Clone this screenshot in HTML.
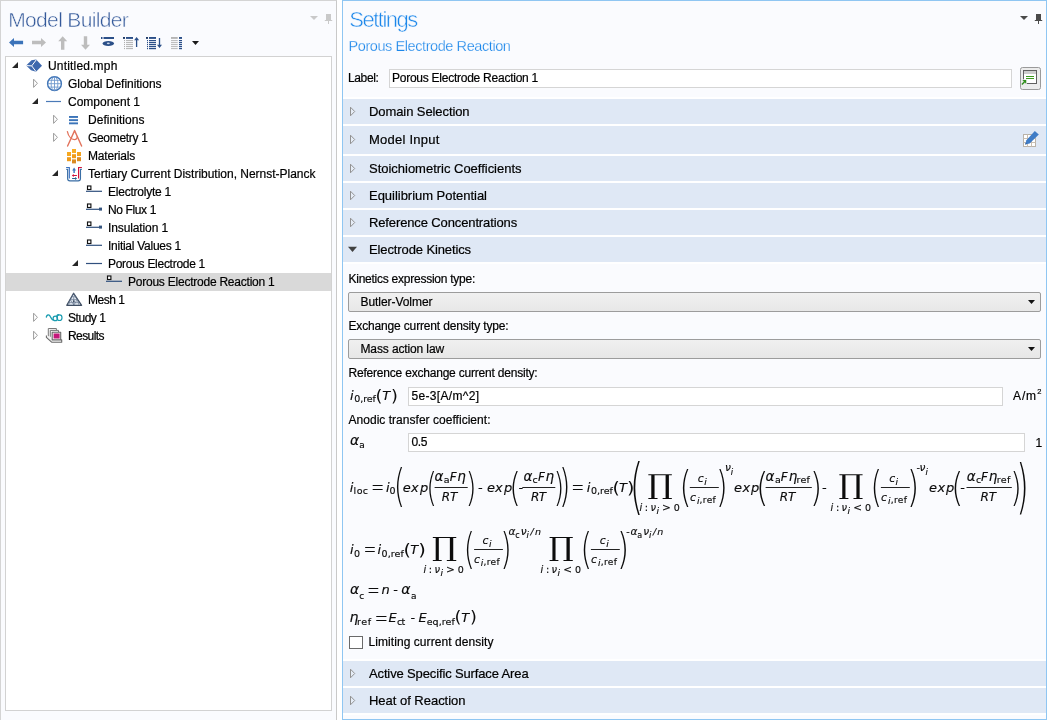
<!DOCTYPE html>
<html lang="en"><head><meta charset="utf-8"><title>Settings - Porous Electrode Reaction</title>
<style>
html,body{margin:0;padding:0;}
body{width:1047px;height:720px;overflow:hidden;background:#fff;font-family:"Liberation Sans",sans-serif;font-size:12px;color:#000;}
#app{will-change:transform;position:relative;width:1047px;height:720px;overflow:hidden;background:#fff;}
.t{position:absolute;white-space:nowrap;line-height:20px;height:20px;-webkit-text-stroke:0.2px currentColor;}
.abs{position:absolute;}
#left{position:absolute;left:0;top:0;width:337px;height:720px;background:#fafbfe;border-left:1px solid #d4d4d4;border-top:1px solid #d4d4d4;border-right:1px solid #c9c9c9;box-sizing:border-box;}
#tree{position:absolute;left:5px;top:56px;width:327px;height:655px;background:#fff;border:1px solid #d2d2d2;box-sizing:border-box;}
#sel{position:absolute;left:6px;top:273px;width:325px;height:18px;background:#d9d9d9;}
#right{position:absolute;left:342px;top:0;width:705px;height:720px;background:#fafbfe;border:1px solid #8fc6f2;box-sizing:border-box;}
.band{position:absolute;left:343px;width:703px;height:25px;background:#dfe8f5;}
.inp{position:absolute;background:#fff;border:1px solid #d5d5d5;box-sizing:border-box;}
.combo{position:absolute;left:348px;width:693px;height:20px;box-sizing:border-box;border:1px solid #9c9c9c;border-radius:2px;background:linear-gradient(#f0f0f0,#e7e7e7);}
svg{position:absolute;overflow:visible;}
.thin{-webkit-text-stroke:0.5px #fafbfe;}
.thin2{-webkit-text-stroke:0.25px #fafbfe;}

</style></head>
<body>
<div id="app">
<div id="left"></div><div id="tree"></div><div id="sel"></div><div id="right"></div>
<div class="inp" style="left:389px;top:69px;width:623px;height:19px"></div>
<div class="abs" style="left:343px;top:97px;width:703px;height:2px;background:#fff"></div><div class="abs" style="left:343px;top:659px;width:703px;height:2px;background:#fff"></div>
<div class="band" style="top:99px;height:25px;border-bottom:2px solid #fff"></div>
<div class="band" style="top:126px;height:28px;border-bottom:2px solid #fff"></div>
<div class="band" style="top:156px;height:25px;border-bottom:2px solid #fff"></div>
<div class="band" style="top:183px;height:25px;border-bottom:2px solid #fff"></div>
<div class="band" style="top:210px;height:25px;border-bottom:2px solid #fff"></div>
<div class="band" style="top:237px;height:25px;border-bottom:2px solid #fff"></div>
<div class="band" style="top:661px;height:25px;border-bottom:2px solid #fff"></div>
<div class="band" style="top:688px;height:25px;border-bottom:2px solid #fff"></div>
<div class="combo" style="top:292px"></div>
<div class="combo" style="top:339px"></div>
<div class="inp" style="left:408px;top:387px;width:595px;height:19px"></div>
<div class="inp" style="left:408px;top:433px;width:617px;height:19px"></div>
<div class="abs" style="left:349px;top:636px;width:14px;height:13px;box-sizing:border-box;border:1px solid #6a6a6a;background:#fff"></div>
<svg id='ic' width='1047' height='720' viewBox='0 0 1047 720' style='left:0;top:0'>
<polygon points='310,16 318,16 314.0,20' fill='#c9c9c9'/>
<path d='M326 14h5v6h1.2v1h-7.4v-1h1.2z' fill='#c9c9c9'/><rect x='328' y='21' width='1' height='3' fill='#c9c9c9'/>
<polygon points='1020,16 1028,16 1024.0,20' fill='#4a4a4a'/>
<path d='M1036 14h5v6h1.2v1h-7.4v-1h1.2z' fill='#4a4a4a'/><rect x='1038' y='21' width='1' height='3' fill='#4a4a4a'/>
<path d='M9 42.5 L14 38 V40.8 H23.1 V44.3 H14 V47 Z' fill='#3b73b9'/>
<path d='M46 42.5 L41 38 V40.8 H32 V44.3 H41 V47 Z' fill='#bdbdbd'/>
<path d='M62.7 36.3 L67.2 41.3 H64.4 V49.7 H61 V41.3 H58.2 Z' fill='#bdbdbd'/>
<path d='M85.5 49.7 L90 44.7 H87.2 V36.2 H83.8 V44.7 H81 Z' fill='#bdbdbd'/>
<rect x='101' y='37' width='1.5' height='2' fill='#2b4f88'/><rect x='103.5' y='37' width='10.5' height='2' fill='#2b4f88'/>
<ellipse cx='108.3' cy='43.5' rx='5.7' ry='2.4' fill='#2b4f88'/><ellipse cx='108.3' cy='43.3' rx='1.5' ry='0.9' fill='#c9d6ea'/>
<rect x='123' y='37' width='2' height='1.9' fill='#1f3a66'/><rect x='126' y='37' width='7' height='1.9' fill='#2b4f88'/>
<rect x='124' y='40.1' width='1' height='1' fill='#a8a8a8'/><rect x='126' y='40.1' width='7' height='1' fill='#b3b3b3'/>
<rect x='124' y='42.1' width='1' height='1' fill='#a8a8a8'/><rect x='126' y='42.1' width='7' height='1' fill='#b3b3b3'/>
<rect x='124' y='44.1' width='1' height='1' fill='#a8a8a8'/><rect x='126' y='44.1' width='7' height='1' fill='#b3b3b3'/>
<rect x='124' y='46.1' width='1' height='1' fill='#a8a8a8'/><rect x='126' y='46.1' width='7' height='1' fill='#b3b3b3'/>
<rect x='124' y='48.1' width='1' height='1' fill='#a8a8a8'/><rect x='126' y='48.1' width='7' height='1' fill='#b3b3b3'/>
<path d='M136.6 36.9 L139.1 40.2 H137.25 V46.9 H135.95 V40.2 H134.1 Z' fill='#2b4f88'/>
<rect x='146' y='37' width='2' height='1.9' fill='#1f3a66'/><rect x='149' y='37' width='7' height='1.9' fill='#2b4f88'/>
<rect x='147' y='40' width='1' height='1.2' fill='#2b4f88'/><rect x='149' y='40' width='7' height='1.2' fill='#2b4f88'/>
<rect x='147' y='42' width='1' height='1.2' fill='#2b4f88'/><rect x='149' y='42' width='7' height='1.2' fill='#2b4f88'/>
<rect x='147' y='44' width='1' height='1.2' fill='#2b4f88'/><rect x='149' y='44' width='7' height='1.2' fill='#2b4f88'/>
<rect x='147' y='46' width='1' height='1.2' fill='#2b4f88'/><rect x='149' y='46' width='7' height='1.2' fill='#2b4f88'/>
<rect x='147' y='48' width='1' height='1.2' fill='#2b4f88'/><rect x='149' y='48' width='7' height='1.2' fill='#2b4f88'/>
<path d='M159.5 48.1 L162 44.8 H160.15 V38 H158.85 V44.8 H157 Z' fill='#2b4f88'/>
<rect x='171' y='37' width='6.7' height='1.9' fill='#b5b5b5'/><rect x='179' y='37' width='3' height='1.9' fill='#2b4f88'/>
<rect x='171' y='40.1' width='6.7' height='1' fill='#b9b9b9'/><rect x='179' y='40' width='3' height='1.2' fill='#2b4f88'/>
<rect x='171' y='42.1' width='6.7' height='1' fill='#b9b9b9'/><rect x='179' y='42' width='3' height='1.2' fill='#2b4f88'/>
<rect x='171' y='44.1' width='6.7' height='1' fill='#b9b9b9'/><rect x='179' y='44' width='3' height='1.2' fill='#2b4f88'/>
<rect x='171' y='46.1' width='6.7' height='1' fill='#b9b9b9'/><rect x='179' y='46' width='3' height='1.2' fill='#2b4f88'/>
<rect x='171' y='48.1' width='6.7' height='1' fill='#b9b9b9'/><rect x='179' y='48' width='3' height='1.2' fill='#2b4f88'/>
<polygon points='192,41 199,41 195.5,45' fill='#1a1a1a'/>
<polygon points='18,62 18,68 12,68' fill='#262626'/>
<polygon points='33.6,79.2 33.6,87.4 37.4,83.3' fill='#fff' stroke='#9c9c9c' stroke-width='1'/>
<polygon points='38,98 38,104 32,104' fill='#262626'/>
<polygon points='53.6,115.2 53.6,123.4 57.4,119.3' fill='#fff' stroke='#9c9c9c' stroke-width='1'/>
<polygon points='53.6,133.2 53.6,141.4 57.4,137.3' fill='#fff' stroke='#9c9c9c' stroke-width='1'/>
<polygon points='58,170 58,176 52,176' fill='#262626'/>
<polygon points='78,260 78,266 72,266' fill='#262626'/>
<polygon points='33.6,313.2 33.6,321.4 37.4,317.3' fill='#fff' stroke='#9c9c9c' stroke-width='1'/>
<polygon points='33.6,331.2 33.6,339.4 37.4,335.3' fill='#fff' stroke='#9c9c9c' stroke-width='1'/>
<polygon points='26.2,65.5 31.5,60.3 36.2,59.5 42,65.8 36,71.8 31,70.3' fill='#3d68ad'/><path d='M26.4 65.6 L31.7 65.9 L36.3 59.8 M31.7 65.9 L36 71.6' stroke='#fff' stroke-width='1' fill='none'/>
<circle cx='54.5' cy='83.7' r='6.9' fill='#fff' stroke='#3f74b6' stroke-width='1.4'/><path d='M54.5 77 V90.4 M47.8 83.7 H61.2 M49 80.3 H60 M49 87.1 H60' stroke='#6d97cd' stroke-width='0.9' fill='none'/><ellipse cx='54.5' cy='83.7' rx='3.4' ry='6.7' fill='none' stroke='#6d97cd' stroke-width='0.9'/>
<rect x='46' y='100.9' width='15' height='1.2' fill='#4a7ab7'/>
<rect x='69' y='116' width='9' height='1.9' fill='#3b74b9'/>
<rect x='69' y='119.2' width='9' height='1.9' fill='#3b74b9'/>
<rect x='69' y='122.4' width='9' height='1.9' fill='#3b74b9'/>
<path d='M74.6 130.6 L67.6 146 M74.6 130.6 L81.6 146' stroke='#e2735c' stroke-width='1.4' fill='none' stroke-linecap='round'/><path d='M67.4 131.6 C68.5 136.5 71.5 139.6 74.4 139.6 C76.3 139.6 77.3 138.4 77.2 136.6' stroke='#e2735c' stroke-width='1.3' fill='none' stroke-linecap='round'/>
<rect x='67' y='152' width='4' height='4' fill='#f6a821'/>
<rect x='67' y='157.2' width='4' height='4' fill='#ee9a1b'/>
<rect x='72' y='149' width='4' height='4' fill='#f8ad25'/>
<rect x='72' y='154.2' width='4' height='4' fill='#f09c1c'/>
<rect x='72' y='159.4' width='4' height='4' fill='#d98a22'/>
<rect x='77' y='152' width='4' height='4' fill='#f3a21f'/>
<rect x='77' y='157.2' width='4' height='4' fill='#dd8d20'/>
<path d='M66.3 169.4 H67.6 V178.6 Q67.6 180.9 69.9 180.9 H78.2 Q80.5 180.9 80.5 178.6 V169.4 H81.8' stroke='#3a6ea5' stroke-width='1.1' fill='none'/><path d='M66.1 167.5 H69.3 V178.6' stroke='#3a72c0' stroke-width='1.2' fill='none'/><path d='M81.9 167.5 H78.6 V178.6' stroke='#d2143c' stroke-width='1.2' fill='none'/><path d='M74.1 167.4 L76 170.4 H74.8 V172.9 H73.4 V170.4 H72.2 Z' fill='#3a72c0'/><path d='M71.8 175.4 L73.8 173.9 V174.9 H76.9 V175.9 H73.8 V176.9 Z' fill='#d2143c'/><path d='M77.1 178.6 L75.1 177.1 V178.1 H72.1 V179.1 H75.1 V180.1 Z' fill='#2a5e8c'/>
<rect x='87.5' y='186' width='3.4' height='3.5' fill='#fff' stroke='#111' stroke-width='1.15'/>
<rect x='86' y='190.7' width='16' height='1.2' fill='#30507e'/>
<rect x='87.5' y='204' width='3.4' height='3.5' fill='#fff' stroke='#111' stroke-width='1.15'/>
<rect x='86' y='208.7' width='13.5' height='1.2' fill='#30507e'/>
<rect x='99' y='207.6' width='3' height='3' fill='#35557f'/>
<rect x='87.5' y='222' width='3.4' height='3.5' fill='#fff' stroke='#111' stroke-width='1.15'/>
<rect x='86' y='226.7' width='13.5' height='1.2' fill='#30507e'/>
<rect x='99' y='225.6' width='3' height='3' fill='#35557f'/>
<rect x='87.5' y='240' width='3.4' height='3.5' fill='#fff' stroke='#111' stroke-width='1.15'/>
<rect x='86' y='244.7' width='16' height='1.2' fill='#30507e'/>
<rect x='107.5' y='276' width='3.4' height='3.5' fill='#fff' stroke='#111' stroke-width='1.15'/>
<rect x='106' y='280.7' width='16' height='1.2' fill='#30507e'/>
<rect x='86' y='262.9' width='16' height='1.2' fill='#30507e'/>
<path d='M73.6 293.3 L81.6 305.3 H66.8 Z' fill='#dde4ee' stroke='#3f4e63' stroke-width='1.3' stroke-linejoin='round'/><path d='M70.2 299.6 H77.2 M73.6 293.6 L70.2 299.6 L73.9 305 L77.2 299.6 Z M68.5 302.6 H79.4 M70.2 299.6 L68.6 305 M77.2 299.6 L79 305 M71.9 296.7 H75.5 M73.7 296.8 V305' stroke='#5d6d85' stroke-width='0.6' fill='none'/><circle cx='73.8' cy='301.2' r='0.9' fill='#3f4e63'/>
<path d='M46.3 317 C46.9 314.6 48.8 314.4 50 316 C51.2 317.8 51.8 319.8 53.2 320.1' stroke='#1a9cb0' stroke-width='1.3' fill='none' stroke-linecap='round'/><circle cx='55.3' cy='318.4' r='2.2' fill='none' stroke='#1a9cb0' stroke-width='1.2'/><ellipse cx='59.5' cy='317.7' rx='2.5' ry='2.8' fill='none' stroke='#1a9cb0' stroke-width='1.2'/><path d='M56.6 316.4 C57 314.8 58.2 314.3 59 314.9' stroke='#1a9cb0' stroke-width='1.1' fill='none'/>
<path d='M48.3 337 V328.5 H56.4 V330.4' fill='#f6f6f6' stroke='#7a7a7a' stroke-width='1'/><path d='M50.3 338.5 V330.4 H58.5 V332.3' fill='#f6f6f6' stroke='#747474' stroke-width='1'/><path d='M46.4 335.6 V337.4 L51.6 342.2 H61.7 V339.9 H52.2 V332.3 H60.7 V339.9' fill='#f3f3f3' stroke='#6a6a6a' stroke-width='1.1' stroke-linejoin='round'/><rect x='53.6' y='333.5' width='6' height='5' fill='#c4177a'/>
<rect x='1020.5' y='67.5' width='20' height='22' rx='2' fill='#ececec' stroke='#9a9a9a'/><rect x='1023.5' y='70.5' width='13' height='13' fill='#fff' stroke='#606060'/><rect x='1024' y='71' width='12' height='3' fill='#cdcdcd'/><rect x='1026' y='76' width='8' height='1' fill='#3c9b1e'/><rect x='1026' y='78' width='8' height='1' fill='#3c9b1e'/><path d='M1021 79.2 H1027 V85.4 H1021 Z' fill='#ececec' opacity='0.9'/><path d='M1022.4 80 H1026.2 V83.8 Z' fill='#2f8f1a'/><path d='M1024.8 81.4 L1021.9 84.4' stroke='#2f8f1a' stroke-width='1.4' fill='none'/>
<rect x='1023.5' y='134.5' width='12' height='12' fill='#fff' stroke='#b9b2a8'/><path d='M1027.5 134.5 V146.5 M1031.5 134.5 V146.5 M1023.5 138.5 H1035.5 M1023.5 142.5 H1035.5' stroke='#c9bfb2' stroke-width='1' fill='none'/><path d='M1034.8 131 L1038.8 134.6 L1029.6 143.6 L1025.2 144.4 L1026.4 140.2 Z' fill='#3f7cc6'/><path d='M1025.2 144.4 L1026.9 144.1 L1025.7 142.9 Z' fill='#24436e'/>
<polygon points='1028,300 1035,300 1031.5,304' fill='#111'/>
<polygon points='1028,347 1035,347 1031.5,351' fill='#111'/>
<polygon points='350.5,107.2 350.5,115.8 354.7,111.5' fill='#e6edf7' stroke='#929292' stroke-width='1'/>
<polygon points='350.5,135.2 350.5,143.8 354.7,139.5' fill='#e6edf7' stroke='#929292' stroke-width='1'/>
<polygon points='350.5,164.2 350.5,172.8 354.7,168.5' fill='#e6edf7' stroke='#929292' stroke-width='1'/>
<polygon points='350.5,191.2 350.5,199.8 354.7,195.5' fill='#e6edf7' stroke='#929292' stroke-width='1'/>
<polygon points='350.5,218.2 350.5,226.8 354.7,222.5' fill='#e6edf7' stroke='#929292' stroke-width='1'/>
<polygon points='350.5,669.2 350.5,677.8 354.7,673.5' fill='#e6edf7' stroke='#929292' stroke-width='1'/>
<polygon points='350.5,696.2 350.5,704.8 354.7,700.5' fill='#e6edf7' stroke='#929292' stroke-width='1'/>
<polygon points='348,246.8 357,246.8 352.5,252' fill='#414141'/>
</svg>
<svg id='eq' width='1047' height='720' viewBox='0 0 1047 720' style='left:0;top:0'>
<style>
#eq text{fill:#0c0c0c;stroke:#0c0c0c;stroke-width:0.15px;font-family:'DejaVu Sans',sans-serif;font-size:13px}
#eq .i{font-style:italic}
#eq .u{font-style:normal}
#eq .L{font-family:'DejaVu Sans Light','DejaVu Sans',sans-serif;font-size:100px;stroke:none}
#eq .D{font-size:100px;stroke:none}
#eq .S{font-family:'DejaVu Serif','Liberation Serif',serif;font-size:100px;stroke:none}
</style>
<text class='i' x='349.80' y='491.70'>i</text>
<text class='u' x='353.60' y='493.60' style="font-size:9.5px;letter-spacing:0.40px">loc</text>
<text class='L' transform='matrix(0.1587 0 0 0.2400 371.03 495.06)'>=</text>
<text class='i' x='385.90' y='491.70'>i</text>
<text class='u' x='389.60' y='493.80' style="font-size:9.5px">0</text>
<text class='L' transform='matrix(0.2914 0 0 0.4380 393.79 501.49)'>(</text>
<text class='i' x='402.7 410.9 419.9' y='491.70'>exp</text>
<text class='L' transform='matrix(0.2743 0 0 0.3933 426.18 500.69)'>(</text>
<text class='i' x='434.50' y='480.70' style="font-size:13.5px">α</text>
<text class='u' x='443.80' y='483.00' style="font-size:9.5px">a</text>
<text class='i' x='449.80' y='480.70' style="font-size:12px">F</text>
<text class='i' x='457.30' y='480.70' style="font-size:13.5px">η</text>
<text class='i' x='441.80' y='500.50' style="font-size:12px;letter-spacing:-0.10px">RT</text>
<text class='L' transform='matrix(0.2833 0 0 0.3933 465.48 500.69)'>)</text>
<text class='u' x='477.90' y='491.70'>-</text>
<text class='i' x='487.0 495.0 504.0' y='491.70'>exp</text>
<text class='L' transform='matrix(0.2971 0 0 0.3933 509.33 500.69)'>(</text>
<text class='u' x='518.40' y='491.70'>-</text>
<text class='i' x='523.50' y='480.70' style="font-size:13.5px">α</text>
<text class='u' x='532.60' y='483.00' style="font-size:9.5px">c</text>
<text class='i' x='537.90' y='480.70' style="font-size:12px">F</text>
<text class='i' x='545.50' y='480.70' style="font-size:13.5px">η</text>
<text class='i' x='530.90' y='500.50' style="font-size:12px;letter-spacing:-0.40px">RT</text>
<text class='L' transform='matrix(0.2778 0 0 0.3933 553.44 500.69)'>)</text>
<text class='L' transform='matrix(0.2944 0 0 0.4380 559.06 501.49)'>)</text>
<text class='L' transform='matrix(0.1556 0 0 0.2400 571.17 495.06)'>=</text>
<text class='i' x='586.80' y='491.70'>i</text>
<text class='u' x='591.10' y='493.80' style="font-size:9.5px;letter-spacing:-0.03px">0,ref</text>
<text class='D' transform='matrix(0.1867 0 0 0.1575 612.41 492.67)'>(</text>
<text class='i' x='619.00' y='491.70'>T</text>
<text class='D' transform='matrix(0.1911 0 0 0.1575 627.07 492.67)'>)</text>
<text class='L' transform='matrix(0.3486 0 0 0.6011 629.87 506.98)'>(</text>
<text class='S' transform='matrix(0.3168 0 0 0.2721 647.41 493.79)'>∏</text>
<text class='i' x='639.50' y='510.70' style="font-size:9.8px">i</text>
<text class='u' x='644.80' y='510.70' style="font-size:9.8px">:</text>
<text class='i' x='650.40' y='510.70' style="font-size:9.8px">ν</text>
<text class='i' x='656.40' y='513.70' style="font-size:9px">i</text>
<text class='u' x='662.10' y='510.70' style="font-size:10.5px">&gt;</text>
<text class='u' x='673.80' y='510.70' style="font-size:9.5px">0</text>
<text class='L' transform='matrix(0.3086 0 0 0.4279 679.51 501.82)'>(</text>
<text class='i' x='697.80' y='481.60' style="font-size:10.8px">c</text>
<text class='i' x='704.20' y='484.60' style="font-size:9px">i</text>
<text class='i' x='690.00' y='500.70' style="font-size:10.8px">c</text>
<text class='i' x='696.90' y='503.60' style="font-size:9px">i</text>
<text class='u' x='699.60' y='503.40' style="font-size:9.0px;letter-spacing:0.37px">,ref</text>
<text class='L' transform='matrix(0.3000 0 0 0.4279 716.00 501.82)'>)</text>
<text class='i' x='725.00' y='471.10' style="font-size:10.5px">ν</text>
<text class='i' x='730.70' y='474.50' style="font-size:8.5px">i</text>
<text class='i' x='734.0 742.5 751.1' y='491.70'>exp</text>
<text class='L' transform='matrix(0.3200 0 0 0.3899 755.88 500.54)'>(</text>
<text class='i' x='765.50' y='480.70' style="font-size:13.5px">α</text>
<text class='u' x='774.90' y='483.00' style="font-size:9.5px">a</text>
<text class='i' x='780.80' y='480.70' style="font-size:12px">F</text>
<text class='i' x='788.70' y='480.70' style="font-size:13.5px">η</text>
<text class='u' x='796.60' y='482.50' style="font-size:9.5px;letter-spacing:0.20px">ref</text>
<text class='i' x='779.80' y='500.50' style="font-size:12px;letter-spacing:-0.20px">RT</text>
<text class='L' transform='matrix(0.3111 0 0 0.3899 809.88 500.54)'>)</text>
<text class='u' x='822.00' y='491.70'>-</text>
<text class='S' transform='matrix(0.3128 0 0 0.2721 838.62 493.79)'>∏</text>
<text class='i' x='830.60' y='510.70' style="font-size:9.8px">i</text>
<text class='u' x='835.90' y='510.70' style="font-size:9.8px">:</text>
<text class='i' x='841.50' y='510.70' style="font-size:9.8px">ν</text>
<text class='i' x='847.50' y='513.70' style="font-size:9px">i</text>
<text class='u' x='853.20' y='510.70' style="font-size:10.5px">&lt;</text>
<text class='u' x='864.90' y='510.70' style="font-size:9.5px">0</text>
<text class='L' transform='matrix(0.2971 0 0 0.4279 870.43 501.82)'>(</text>
<text class='i' x='889.20' y='481.60' style="font-size:10.8px">c</text>
<text class='i' x='895.60' y='484.60' style="font-size:9px">i</text>
<text class='i' x='881.10' y='500.70' style="font-size:10.8px">c</text>
<text class='i' x='888.00' y='503.60' style="font-size:9px">i</text>
<text class='u' x='890.70' y='503.40' style="font-size:9.0px;letter-spacing:0.37px">,ref</text>
<text class='L' transform='matrix(0.3111 0 0 0.4279 907.08 501.82)'>)</text>
<text class='u' x='916.50' y='471.10' style="font-size:9.5px">-</text>
<text class='i' x='919.50' y='471.10' style="font-size:10.5px">ν</text>
<text class='i' x='925.50' y='474.50' style="font-size:8.5px">i</text>
<text class='i' x='928.9 937.4 946.0' y='491.70'>exp</text>
<text class='L' transform='matrix(0.3086 0 0 0.3899 951.21 500.54)'>(</text>
<text class='u' x='960.20' y='491.70'>-</text>
<text class='i' x='966.80' y='480.70' style="font-size:13.5px">α</text>
<text class='u' x='976.00' y='483.00' style="font-size:9.5px">c</text>
<text class='i' x='981.10' y='480.70' style="font-size:12px">F</text>
<text class='i' x='988.80' y='480.70' style="font-size:13.5px">η</text>
<text class='u' x='996.80' y='482.50' style="font-size:9.5px;letter-spacing:0.35px">ref</text>
<text class='i' x='980.60' y='500.50' style="font-size:12px;letter-spacing:-0.10px">RT</text>
<text class='L' transform='matrix(0.2944 0 0 0.3899 1010.36 500.54)'>)</text>
<text class='L' transform='matrix(0.3222 0 0 0.5944 1016.26 506.68)'>)</text>
<text class='i' x='350.10' y='553.60'>i</text>
<text class='u' x='354.10' y='556.50' style="font-size:9.5px">0</text>
<text class='L' transform='matrix(0.1540 0 0 0.2400 363.38 557.26)'>=</text>
<text class='i' x='377.60' y='553.60'>i</text>
<text class='u' x='381.60' y='556.50' style="font-size:9.5px;letter-spacing:0.08px">0,ref</text>
<text class='D' transform='matrix(0.1911 0 0 0.1587 403.38 555.06)'>(</text>
<text class='i' x='410.30' y='553.60'>T</text>
<text class='D' transform='matrix(0.1956 0 0 0.1587 418.14 555.06)'>)</text>
<text class='S' transform='matrix(0.3154 0 0 0.2656 431.71 555.72)'>∏</text>
<text class='i' x='423.50' y='572.50' style="font-size:9.8px">i</text>
<text class='u' x='428.80' y='572.50' style="font-size:9.8px">:</text>
<text class='i' x='434.40' y='572.50' style="font-size:9.8px">ν</text>
<text class='i' x='440.40' y='575.50' style="font-size:9px">i</text>
<text class='u' x='446.10' y='572.50' style="font-size:10.5px">&gt;</text>
<text class='u' x='457.80' y='572.50' style="font-size:9.5px">0</text>
<text class='L' transform='matrix(0.2857 0 0 0.4268 463.86 564.04)'>(</text>
<text class='i' x='482.50' y='543.60' style="font-size:10.8px">c</text>
<text class='i' x='488.90' y='546.60' style="font-size:9px">i</text>
<text class='i' x='473.90' y='562.70' style="font-size:10.8px">c</text>
<text class='i' x='480.80' y='565.60' style="font-size:9px">i</text>
<text class='u' x='483.50' y='565.40' style="font-size:9.0px;letter-spacing:0.37px">,ref</text>
<text class='L' transform='matrix(0.2944 0 0 0.4268 500.36 564.04)'>)</text>
<text class='i' x='508.40' y='534.50' style="font-size:10.5px">α</text>
<text class='u' x='515.30' y='537.60' style="font-size:8px">c</text>
<text class='i' x='520.80' y='534.50' style="font-size:10.5px">ν</text>
<text class='i' x='526.60' y='537.60' style="font-size:8.5px">i</text>
<text class='i' x='530.50' y='534.50' style="font-size:9.5px">/</text>
<text class='i' x='534.90' y='534.50' style="font-size:9.5px">n</text>
<text class='S' transform='matrix(0.3128 0 0 0.2656 548.62 555.72)'>∏</text>
<text class='i' x='540.60' y='572.50' style="font-size:9.8px">i</text>
<text class='u' x='545.90' y='572.50' style="font-size:9.8px">:</text>
<text class='i' x='551.50' y='572.50' style="font-size:9.8px">ν</text>
<text class='i' x='557.50' y='575.50' style="font-size:9px">i</text>
<text class='u' x='563.20' y='572.50' style="font-size:10.5px">&lt;</text>
<text class='u' x='574.90' y='572.50' style="font-size:9.5px">0</text>
<text class='L' transform='matrix(0.2971 0 0 0.4268 580.43 564.04)'>(</text>
<text class='i' x='599.80' y='543.60' style="font-size:10.8px">c</text>
<text class='i' x='606.20' y='546.60' style="font-size:9px">i</text>
<text class='i' x='591.10' y='562.70' style="font-size:10.8px">c</text>
<text class='i' x='598.00' y='565.60' style="font-size:9px">i</text>
<text class='u' x='600.70' y='565.40' style="font-size:9.0px;letter-spacing:0.37px">,ref</text>
<text class='L' transform='matrix(0.3111 0 0 0.4268 617.08 564.04)'>)</text>
<text class='u' x='626.20' y='534.50' style="font-size:9.5px">-</text>
<text class='i' x='630.40' y='534.50' style="font-size:10.5px">α</text>
<text class='u' x='637.30' y='537.60' style="font-size:8px">a</text>
<text class='i' x='643.20' y='534.50' style="font-size:10.5px">ν</text>
<text class='i' x='649.00' y='537.60' style="font-size:8.5px">i</text>
<text class='i' x='653.00' y='534.50' style="font-size:9.5px">/</text>
<text class='i' x='657.30' y='534.50' style="font-size:9.5px">n</text>
<text class='i' x='349.90' y='593.80' style="font-size:14px">α</text>
<text class='u' x='359.20' y='598.70' style="font-size:9px">c</text>
<text class='L' transform='matrix(0.1540 0 0 0.2350 367.08 597.65)'>=</text>
<text class='i' x='381.50' y='593.80'>n</text>
<text class='u' x='393.30' y='593.80'>-</text>
<text class='i' x='401.30' y='593.80' style="font-size:14px">α</text>
<text class='u' x='411.00' y='598.70' style="font-size:9px">a</text>
<text class='i' x='349.40' y='621.50' style="font-size:14px">η</text>
<text class='u' x='357.00' y='624.50' style="font-size:9.5px;letter-spacing:0.65px">ref</text>
<text class='L' transform='matrix(0.1635 0 0 0.2350 374.48 625.75)'>=</text>
<text class='i' x='388.60' y='621.50'>E</text>
<text class='u' x='397.10' y='624.50' style="font-size:9.5px;letter-spacing:-0.90px">ct</text>
<text class='u' x='410.40' y='621.50'>-</text>
<text class='i' x='418.40' y='621.50'>E</text>
<text class='u' x='426.70' y='624.50' style="font-size:9.5px;letter-spacing:0.06px">eq,ref</text>
<text class='D' transform='matrix(0.1778 0 0 0.1564 454.49 621.99)'>(</text>
<text class='i' x='461.20' y='621.50'>T</text>
<text class='D' transform='matrix(0.1778 0 0 0.1564 469.98 621.99)'>)</text>
<text class='i' x='349.90' y='399.80'>i</text>
<text class='u' x='354.30' y='401.80' style="font-size:9.5px;letter-spacing:-0.10px">0,ref</text>
<text class='D' transform='matrix(0.1778 0 0 0.1564 375.59 400.59)'>(</text>
<text class='i' x='382.30' y='399.80'>T</text>
<text class='D' transform='matrix(0.1778 0 0 0.1564 391.08 400.59)'>)</text>
<text class='i' x='349.90' y='444.80' style="font-size:14px">α</text>
<text class='u' x='359.20' y='447.60' style="font-size:9px">a</text>
<rect x='434.6' y='487' width='33.1' height='1' fill='#222'/>
<rect x='522.3' y='487' width='33.0' height='1' fill='#222'/>
<rect x='689.8' y='487' width='29.0' height='1' fill='#222'/>
<rect x='765.6' y='487' width='46.2' height='1' fill='#222'/>
<rect x='880.9' y='487' width='28.9' height='1' fill='#222'/>
<rect x='966.5' y='487' width='45.3' height='1' fill='#222'/>
<rect x='474.1' y='549' width='28.8' height='1' fill='#222'/>
<rect x='590.9' y='549' width='28.9' height='1' fill='#222'/>
</svg>
<span class="t thin" style="left:8.2px;top:9.5px;font-size:21px;letter-spacing:-0.647px;color:#34599a;">Model Builder</span>
<span class="t thin" style="left:349.3px;top:9.5px;font-size:22px;letter-spacing:-1.500px;color:#1c87ea;">Settings</span>
<span class="t thin2" style="left:348.5px;top:36.0px;font-size:14.5px;letter-spacing:-0.420px;color:#1c87ea;">Porous Electrode Reaction</span>
<span class="t " style="left:348px;top:68.0px;font-size:12px;letter-spacing:-0.367px;">Label:</span>
<span class="t " style="left:392px;top:67.5px;font-size:12px;letter-spacing:-0.251px;">Porous Electrode Reaction 1</span>
<span class="t " style="left:48px;top:56.0px;font-size:12px;letter-spacing:0.177px;">Untitled.mph</span>
<span class="t " style="left:68px;top:74.0px;font-size:12px;letter-spacing:-0.031px;">Global Definitions</span>
<span class="t " style="left:68px;top:92.0px;font-size:12px;letter-spacing:-0.004px;">Component 1</span>
<span class="t " style="left:88px;top:110.0px;font-size:12px;letter-spacing:0.043px;">Definitions</span>
<span class="t " style="left:88px;top:128.0px;font-size:12px;letter-spacing:-0.320px;">Geometry 1</span>
<span class="t " style="left:88px;top:146.0px;font-size:12px;letter-spacing:-0.188px;">Materials</span>
<span class="t " style="left:88px;top:164.0px;font-size:12px;letter-spacing:-0.013px;">Tertiary Current Distribution, Nernst-Planck</span>
<span class="t " style="left:108px;top:182.0px;font-size:12px;letter-spacing:-0.233px;">Electrolyte 1</span>
<span class="t " style="left:108px;top:200.0px;font-size:12px;letter-spacing:-0.373px;">No Flux 1</span>
<span class="t " style="left:108px;top:218.0px;font-size:12px;letter-spacing:-0.116px;">Insulation 1</span>
<span class="t " style="left:108px;top:236.0px;font-size:12px;letter-spacing:-0.260px;">Initial Values 1</span>
<span class="t " style="left:108px;top:254.0px;font-size:12px;letter-spacing:-0.281px;">Porous Electrode 1</span>
<span class="t " style="left:128px;top:272.0px;font-size:12px;letter-spacing:-0.232px;">Porous Electrode Reaction 1</span>
<span class="t " style="left:88px;top:290.0px;font-size:12px;letter-spacing:-0.477px;">Mesh 1</span>
<span class="t " style="left:68px;top:308.0px;font-size:12px;letter-spacing:-0.458px;">Study 1</span>
<span class="t " style="left:68px;top:326.0px;font-size:12px;letter-spacing:-0.574px;">Results</span>
<span class="t " style="left:369px;top:102.0px;font-size:13px;letter-spacing:-0.087px;">Domain Selection</span>
<span class="t " style="left:369px;top:130.0px;font-size:13px;letter-spacing:0.233px;">Model Input</span>
<span class="t " style="left:369px;top:159.0px;font-size:13px;letter-spacing:-0.016px;">Stoichiometric Coefficients</span>
<span class="t " style="left:369px;top:186.0px;font-size:13px;letter-spacing:-0.025px;">Equilibrium Potential</span>
<span class="t " style="left:369px;top:213.0px;font-size:13px;letter-spacing:-0.126px;">Reference Concentrations</span>
<span class="t " style="left:369px;top:240.0px;font-size:13px;letter-spacing:-0.115px;">Electrode Kinetics</span>
<span class="t " style="left:369px;top:664.0px;font-size:13px;letter-spacing:-0.136px;">Active Specific Surface Area</span>
<span class="t " style="left:369px;top:691.0px;font-size:13px;letter-spacing:-0.021px;">Heat of Reaction</span>
<span class="t " style="left:348.5px;top:269.0px;font-size:12px;letter-spacing:-0.249px;">Kinetics expression type:</span>
<span class="t " style="left:360.5px;top:292.0px;font-size:12px;letter-spacing:-0.054px;">Butler-Volmer</span>
<span class="t " style="left:348.5px;top:316.0px;font-size:12px;letter-spacing:-0.159px;">Exchange current density type:</span>
<span class="t " style="left:360.5px;top:339.0px;font-size:12px;letter-spacing:-0.125px;">Mass action law</span>
<span class="t " style="left:348.5px;top:363.0px;font-size:12px;letter-spacing:-0.204px;">Reference exchange current density:</span>
<span class="t " style="left:411.5px;top:386.0px;font-size:12px;letter-spacing:0.334px;">5e-3[A/m^2]</span>
<span class="t " style="left:348.5px;top:410.0px;font-size:12px;letter-spacing:0.029px;">Anodic transfer coefficient:</span>
<span class="t " style="left:411.5px;top:431.5px;font-size:12px;letter-spacing:-0.396px;">0.5</span>
<span class="t " style="left:1035.5px;top:432.7px;font-size:12px;">1</span>
<span class="t " style="left:1013px;top:386.0px;font-size:12px;letter-spacing:0.885px;">A/m</span>
<span class="t " style="left:1037.3px;top:382.0px;font-size:7.5px;">2</span>
<span class="t " style="left:368.5px;top:632.0px;font-size:12px;letter-spacing:0.067px;">Limiting current density</span>
</div>
</body></html>
